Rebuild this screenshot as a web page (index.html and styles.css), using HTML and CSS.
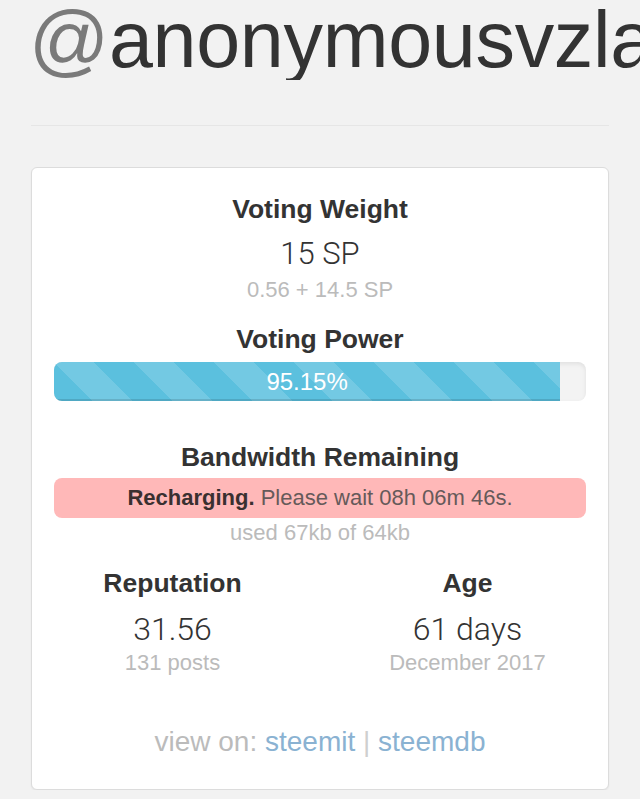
FILE: index.html
```html
<!DOCTYPE html>
<html lang="en">
<head>
<meta charset="utf-8">
<title>@anonymousvzla</title>
<link rel="stylesheet" href="styles.css">
</head>
<body>
<div class="page">
  <h1 class="title"><span class="at">@</span>anonymousvzla</h1>
  <hr class="rule">
  <div class="card">
    <div class="stat">
      <h2 class="label">Voting Weight</h2>
      <div class="value">15 SP</div>
      <div class="sub">0.56 + 14.5 SP</div>
    </div>

    <h2 class="label label-power">Voting Power</h2>
    <div class="progress">
      <div class="progress-fill" style="width: 95.15%">95.15%</div>
    </div>

    <h2 class="label label-bw">Bandwidth Remaining</h2>
    <div class="alert"><strong>Recharging.</strong> Please wait 08h 06m 46s.</div>
    <div class="sub sub-used">used 67kb of 64kb</div>

    <div class="cols">
      <div class="col">
        <h2 class="label">Reputation</h2>
        <div class="value value-col">31.56</div>
        <div class="sub sub-col">131 posts</div>
      </div>
      <div class="col">
        <h2 class="label">Age</h2>
        <div class="value value-col">61 days</div>
        <div class="sub sub-col">December 2017</div>
      </div>
    </div>

    <div class="links">view on: <a href="#">steemit</a> <span class="sep">|</span> <a href="#">steemdb</a></div>
  </div>
</div>
</body>
</html>
```

FILE: styles.css
```css
html, body {
  margin: 0;
  padding: 0;
  background: #f2f2f2;
  overflow-x: hidden;
}

body {
  font-family: "Liberation Sans", Arial, sans-serif;
  color: #333;
}

.page {
  padding: 0 31px;
}

.title {
  margin: 0 -40px 0 -2px;
  font-size: 79px;
  font-weight: 400;
  line-height: 80px;
  white-space: nowrap;
  overflow: hidden;
  color: #333;
  letter-spacing: -0.3px;
}

.title .at {
  color: #7a7a7a;
}

.rule {
  margin: 45px 0 0;
  border: 0;
  border-top: 1px solid #e6e6e6;
  height: 0;
}

.card {
  margin-top: 41px;
  background: #fff;
  border: 1px solid #dcdcdc;
  border-radius: 6px;
  box-shadow: 0 1px 2px rgba(0, 0, 0, 0.06);
  padding: 23px 22px 27px;
  text-align: center;
}

.label {
  margin: 0;
  font-size: 26.5px;
  font-weight: 700;
  line-height: 36px;
  color: #333;
}

.value {
  margin-top: 7px;
  font-family: Roboto, "Liberation Sans", sans-serif;
  font-weight: 300;
  font-size: 31px;
  line-height: 40px;
  color: #333;
}

.sub {
  font-size: 22px;
  line-height: 32px;
  color: #bbb;
}

.label-power {
  margin-top: 15px;
}

.progress {
  margin-top: 5px;
  height: 39px;
  background: #f3f3f3;
  border-radius: 8px;
  overflow: hidden;
  box-shadow: inset 0 2px 4px rgba(0, 0, 0, 0.08);
}

.progress-fill {
  height: 100%;
  background-color: #5bc0de;
  background-image: linear-gradient(45deg,
    rgba(255, 255, 255, 0.15) 25%, transparent 25%,
    transparent 50%, rgba(255, 255, 255, 0.15) 50%,
    rgba(255, 255, 255, 0.15) 75%, transparent 75%, transparent);
  background-size: 80px 80px;
  box-shadow: inset 0 -2px 0 rgba(0, 0, 0, 0.12);
  color: #fff;
  font-size: 24px;
  line-height: 39px;
}

.label-bw {
  margin-top: 38px;
}

.alert {
  margin-top: 3px;
  height: 40px;
  line-height: 40px;
  background: #ffb8b8;
  border-radius: 8px;
  font-size: 22px;
  color: #665a5a;
}

.alert strong {
  color: #3a3030;
  font-weight: 700;
}

.sub-used {
  margin-top: 1px;
  line-height: 28px;
}

.cols {
  margin: 18px -29px 0;
  display: grid;
  grid-template-columns: 1fr 1fr;
}

.value-col {
  margin-top: 8px;
  font-size: 32px;
}

.sub-col {
  line-height: 28px;
}

.links {
  margin-top: 45px;
  font-size: 28px;
  line-height: 40px;
  color: #bbb;
}

.links a {
  color: #8ab2d2;
  text-decoration: none;
}

.links .sep {
  color: #cfcfcf;
  font-weight: 300;
}
```
